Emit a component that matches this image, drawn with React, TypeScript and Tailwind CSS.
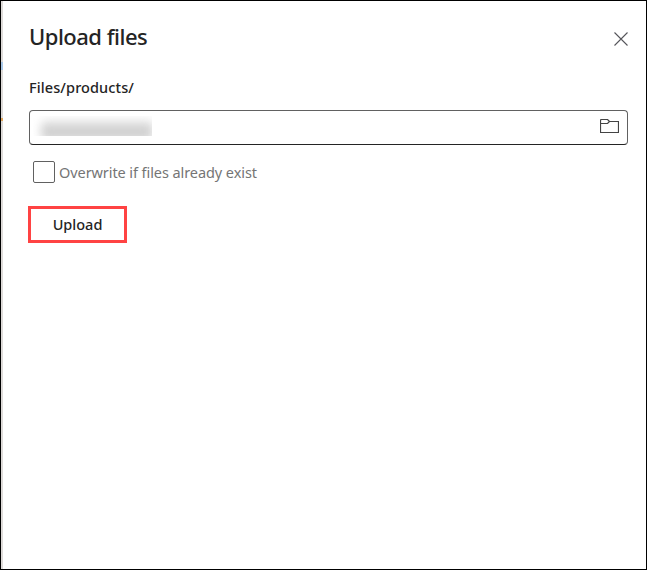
export default function App() {
  return (
    <div className="flex h-[570px] w-[647px] border border-black bg-white font-['Noto_Sans',sans-serif] text-[#242424]">
      <div className="w-[2px] shrink-0 bg-[#dedbd9]">
        <div className="mt-[61px] h-2 bg-[#a9c8e8]" />
        <div className="mt-[48px] h-[3px] bg-[#dfa45c]" />
      </div>
      <main className="flex min-w-0 flex-1 flex-col items-start pl-[26px] pr-[18px] pt-[19px]">
        <header className="flex h-8 w-full items-center justify-between">
          <h1 className="whitespace-nowrap text-[22px] font-medium leading-8 tracking-[-0.5px]">Upload files</h1>
          <button aria-label="Close" className="mt-[5px] h-[14px] w-[14px]">
            <svg width="14" height="14" viewBox="0 0 14 14" fill="none" stroke="#55555a" strokeWidth="1.1">
              <path d="M0.5 0.5 13.5 13.5M13.5 0.5 0.5 13.5" />
            </svg>
          </button>
        </header>
        <div className="mt-[25px] h-5 whitespace-nowrap text-[14.5px] font-medium leading-5 tracking-[0.1px]">Files/products/</div>
        <div className="mt-[13px] flex h-[35px] w-[599px] items-center justify-between rounded-[4px] border border-[#616161] border-b-[#242424] pl-[3px] pr-2">
          <div className="mb-[3px] h-5 w-[119px] overflow-hidden">
            <div className="ml-2 mt-[5px] h-[18px] w-[112px] rounded bg-linear-to-b from-[#e0e0e0] to-[#c6c6c6] blur-[5px]" />
          </div>
          <svg className="mb-[3px]" width="19" height="14" viewBox="0 0 19 14" fill="none" stroke="#444" strokeWidth="1.2">
            <path d="M.5 13.5V1.5Q.5.5 1.5.5H7.5L9.5 2.5H18.5V13.5ZM.5 4.5H7.5L9.5 2.5" />
          </svg>
        </div>
        <label className="ml-1 mt-4 flex h-[22px] items-center">
          <span className="h-[22px] w-[22px] rounded-[2px] border border-[#616161]" />
          <span className="ml-1 whitespace-nowrap text-[14.5px] leading-5 tracking-[-0.08px] text-[#757575]">Overwrite if files already exist</span>
        </label>
        <button className="-ml-px mt-[23px] flex h-[37px] w-[99px] items-center justify-center border-[3px] border-[#ff4343] text-[14.5px] font-medium">
          Upload
        </button>
      </main>
    </div>
  );
}
